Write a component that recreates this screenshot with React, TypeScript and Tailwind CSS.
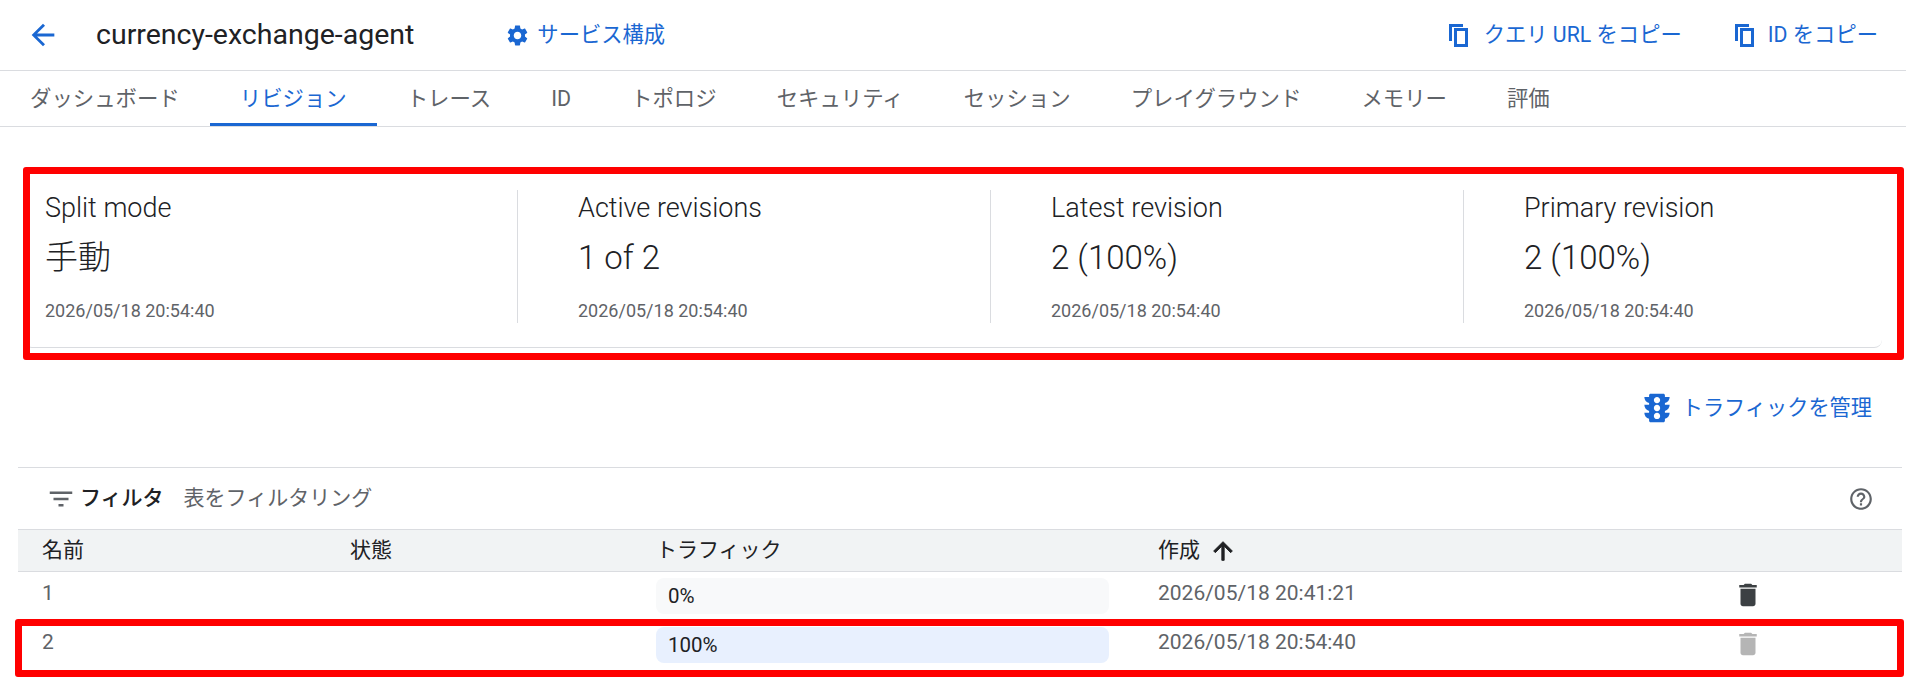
const FONT = "font-['Roboto','Noto_Sans_CJK_JP',sans-serif]";

const ICONS = {
  back: "M20 11H7.83l5.59-5.59L12 4l-8 8 8 8 1.41-1.41L7.83 13H20v-2z",
  gear: "M19.14 12.94c.04-.3.06-.61.06-.94 0-.32-.02-.64-.07-.94l2.03-1.58c.18-.14.23-.41.12-.61l-1.92-3.32c-.12-.22-.37-.29-.59-.22l-2.39.96c-.5-.38-1.03-.7-1.62-.94l-.36-2.54c-.04-.24-.24-.41-.48-.41h-3.84c-.24 0-.43.17-.47.41l-.36 2.54c-.59.24-1.13.57-1.62.94l-2.39-.96c-.22-.08-.47 0-.59.22L2.74 8.87c-.12.21-.08.47.12.61l2.03 1.58c-.05.3-.09.63-.09.94s.02.64.07.94l-2.03 1.58c-.18.14-.23.41-.12.61l1.92 3.32c.12.22.37.29.59.22l2.39-.96c.5.38 1.03.7 1.62.94l.36 2.54c.05.24.24.41.48.41h3.84c.24 0 .44-.17.47-.41l.36-2.54c.59-.24 1.13-.56 1.62-.94l2.39.96c.22.08.47 0 .59-.22l1.92-3.32c.12-.22.07-.47-.12-.61l-2.01-1.58zM12 15.6c-1.98 0-3.6-1.62-3.6-3.6s1.62-3.6 3.6-3.6 3.6 1.62 3.6 3.6-1.62 3.6-3.6 3.6z",
  copy: "M17 1H3v17h3V4h11V1zm5 4H8v19h14V5zm-3 16h-8V8h8v13z",
  traffic: "M20 10h-3V8.86c1.72-.45 3-2 3-3.86h-3V4c0-.55-.45-1-1-1H8c-.55 0-1 .45-1 1v1H4c0 1.86 1.28 3.41 3 3.86V10H4c0 1.86 1.28 3.41 3 3.86V15H4c0 1.86 1.28 3.41 3 3.86V20c0 .55.45 1 1 1h8c.55 0 1-.45 1-1v-1.14c1.72-.45 3-2 3-3.86h-3v-1.14c1.72-.45 3-2 3-3.86zm-8 9c-1.11 0-2-.9-2-2s.89-2 2-2c1.1 0 2 .9 2 2s-.89 2-2 2zm0-5c-1.11 0-2-.9-2-2s.89-2 2-2c1.1 0 2 .9 2 2s-.89 2-2 2zm0-5c-1.11 0-2-.9-2-2 0-1.11.89-2 2-2 1.1 0 2 .89 2 2 0 1.1-.89 2-2 2z",
  filter: "M10 18h4v-2h-4v2zM3 6v2h18V6H3zm3 7h12v-2H6v2z",
  help: "M11 18h2v-2h-2v2zm1-16C6.48 2 2 6.48 2 12s4.48 10 10 10 10-4.48 10-10S17.52 2 12 2zm0 18c-4.41 0-8-3.59-8-8s3.59-8 8-8 8 3.59 8 8-3.59 8-8 8zm0-14c-2.21 0-4 1.79-4 4h2c0-1.1.9-2 2-2s2 .9 2 2c0 2-3 1.75-3 5h2c0-2.25 3-2.5 3-5 0-2.21-1.79-4-4-4z",
  up: "M4 12l1.41 1.41L11 7.83V20h2V7.83l5.58 5.59L20 12l-8-8-8 8z",
  trash: "M6 19c0 1.1.9 2 2 2h8c1.1 0 2-.9 2-2V7H6v12zM19 4h-3.5l-1-1h-5l-1 1H5v2h14V4z",
};

const Icon = ({ d, className }: { d: string; className: string }) => (
  <svg viewBox="0 0 24 24" fill="currentColor" className={className}>
    <path d={d} />
  </svg>
);

const tabs = ["ダッシュボード", "リビジョン", "トレース", "ID", "トポロジ", "セキュリティ", "セッション", "プレイグラウンド", "メモリー", "評価"];

const stats = [
  { label: "Split mode", value: "手動", width: "w-[494px]" },
  { label: "Active revisions", value: "1 of 2", width: "w-[473px]" },
  { label: "Latest revision", value: "2 (100%)", width: "w-[473px]" },
  { label: "Primary revision", value: "2 (100%)", width: "flex-1" },
];

const rows = [
  { name: "1", traffic: "0%", pill: "bg-[#f8f9fa]", created: "2026/05/18 20:41:21", trash: "text-[#3c4043]", height: "h-[49px]" },
  { name: "2", traffic: "100%", pill: "bg-[#e8f0fe]", created: "2026/05/18 20:54:40", trash: "text-[#b5b5b5]", height: "h-[53px]" },
];

const gridCols = "grid grid-cols-[308px_306px_502px_1fr_169px]";

export default function App() {
  return (
    <div className={`relative h-[687px] w-[1906px] overflow-hidden bg-white ${FONT}`}>
      {/* header */}
      <div className="flex h-[71px] items-center border-b border-[#dadce0] pl-[26px] pr-[28px] text-[#1a67d2]">
        <Icon d={ICONS.back} className="h-[34px] w-[34px]" />
        <span className="ml-[36px] text-[28.5px] text-[#202124]">currency-exchange-agent</span>
        <span className="ml-[91px] flex items-center gap-[7px] text-[21.3px]">
          <Icon d={ICONS.gear} className="h-[25px] w-[25px]" />
          サービス構成
        </span>
        <span className="ml-auto flex items-center gap-[14px] text-[21.3px]">
          <Icon d={ICONS.copy} className="h-[24px] w-[24px]" />
          クエリ URL をコピー
        </span>
        <span className="ml-[50px] flex items-center gap-[12px] text-[21.3px]">
          <Icon d={ICONS.copy} className="h-[24px] w-[24px]" />
          ID をコピー
        </span>
      </div>

      {/* tabs */}
      <div className="flex h-[56px] border-b border-[#dadce0] text-[21.4px] text-[#5f6368]">
        {tabs.map((tab, i) => (
          <div
            key={tab}
            className={`flex items-center px-[30px] ${i === 1 ? "border-b-[3px] border-[#1a67d2] pt-[4px] text-[#1a67d2]" : "pt-[1px]"}`}
          >
            {tab}
          </div>
        ))}
      </div>

      {/* summary card */}
      <div className="mx-[24px] mt-[44px] flex h-[177px] rounded-lg border-b border-[#dadce0] pt-[19px]">
        {stats.map((s, i) => (
          <div key={s.label} className={`h-[133px] ${s.width} ${i < 3 ? "border-r border-[#dadce0]" : ""} ${i > 0 ? "pl-[60px]" : "pl-[21px]"}`}>
            <div className="text-[27px] font-light leading-[36px] text-[#202124]">{s.label}</div>
            <div className="mt-[10px] text-[33px] font-light leading-[44px] text-[#202124]">{s.value}</div>
            <div className="mt-[19px] text-[18px] leading-[24px] text-[#5f6368]">2026/05/18 20:54:40</div>
          </div>
        ))}
      </div>

      <div className="mt-[41px] flex items-center justify-end gap-[6px] pr-[34px] text-[21.2px] text-[#1a67d2]">
        <Icon d={ICONS.traffic} className="h-[38px] w-[38px]" />
        トラフィックを管理
      </div>

      {/* table */}
      <div className="ml-[18px] mr-[4px] mt-[40px]">
        <div className="flex h-[62px] items-center border-t border-[#dadce0] pl-[28px] pr-[28px]">
          <Icon d={ICONS.filter} className="h-[30px] w-[30px] text-[#5f6368]" />
          <span className="ml-[4px] text-[21px] font-medium text-[#202124]">フィルタ</span>
          <span className="ml-[20px] text-[21px] text-[#5f6368]">表をフィルタリング</span>
          <Icon d={ICONS.help} className="ml-auto h-[26px] w-[26px] text-[#5f6368]" />
        </div>
        <div className={`${gridCols} h-[43px] items-center border-y border-[#dadce0] bg-[#f1f3f4] pl-[24px] text-[21px] text-[#202124]`}>
          <span>名前</span>
          <span>状態</span>
          <span>トラフィック</span>
          <span className="col-span-2 flex items-center gap-[9px]">
            作成
            <Icon d={ICONS.up} className="h-[28px] w-[28px] stroke-current stroke-[0.8]" />
          </span>
        </div>
        {rows.map((r) => (
          <div key={r.name} className={`${gridCols} ${r.height} border-b border-[#dadce0] pl-[24px] text-[21px] text-[#5f6368]`}>
            <span className="pt-[6px] leading-[30px]">{r.name}</span>
            <span />
            <div className="pr-[49px] pt-[6px]">
              <div className={`flex h-[36px] items-center rounded-lg pl-[12px] text-[20.5px] text-[#202124] ${r.pill}`}>{r.traffic}</div>
            </div>
            <span className="pt-[6px] leading-[30px]">{r.created}</span>
            <Icon d={ICONS.trash} className={`mt-[8px] h-[30px] w-[30px] ${r.trash}`} />
          </div>
        ))}
      </div>

      {/* red annotations */}
      <div className="absolute left-[23px] top-[167px] h-[193px] w-[1881px] rounded-[3px] border-[7px] border-[#ff0000]" />
      <div className="absolute left-[15px] top-[619px] h-[58px] w-[1889px] rounded-[3px] border-[7px] border-[#ff0000]" />
    </div>
  );
}
